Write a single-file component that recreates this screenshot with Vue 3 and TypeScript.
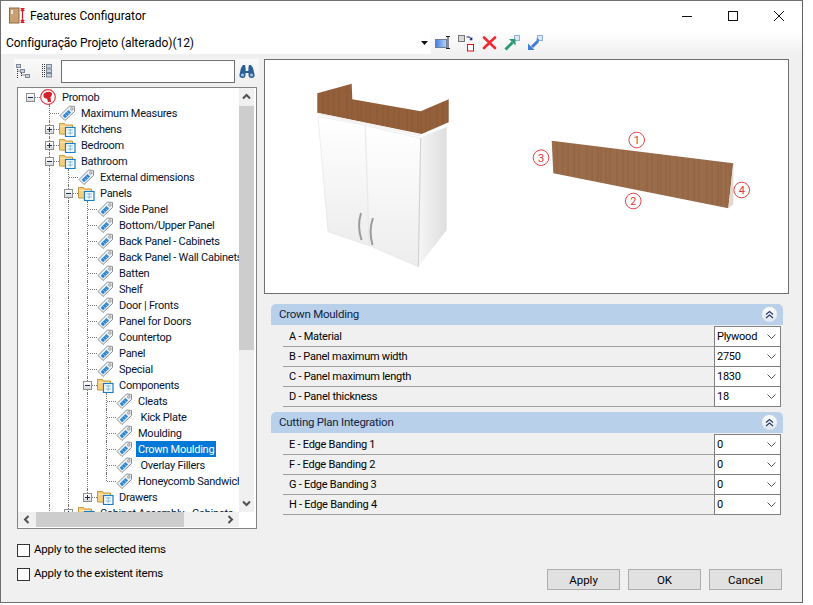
<script setup lang="ts">
import { computed } from 'vue'

type Kind = 'root' | 'folder' | 'tag'
type Toggle = 'open' | 'closed' | null

interface TreeItem {
  label: string
  depth: number
  kind: Kind
  toggle: Toggle
  selected?: boolean
}

const item = (label: string, depth: number, kind: Kind = 'tag', toggle: Toggle = null, selected = false): TreeItem => ({
  label, depth, kind, toggle, selected
})

const items: TreeItem[] = [
  item('Promob', 0, 'root', 'open'),
  item('Maximum Measures', 1),
  item('Kitchens', 1, 'folder', 'closed'),
  item('Bedroom', 1, 'folder', 'closed'),
  item('Bathroom', 1, 'folder', 'open'),
  item('External dimensions', 2),
  item('Panels', 2, 'folder', 'open'),
  item('Side Panel', 3),
  item('Bottom/Upper Panel', 3),
  item('Back Panel - Cabinets', 3),
  item('Back Panel - Wall Cabinets', 3),
  item('Batten', 3),
  item('Shelf', 3),
  item('Door | Fronts', 3),
  item('Panel for Doors', 3),
  item('Countertop', 3),
  item('Panel', 3),
  item('Special', 3),
  item('Components', 3, 'folder', 'open'),
  item('Cleats', 4),
  item(' Kick Plate', 4),
  item('Moulding', 4),
  item('Crown Moulding', 4, 'tag', null, true),
  item(' Overlay Fillers', 4),
  item('Honeycomb Sandwich', 4),
  item('Drawers', 3, 'folder', 'closed'),
  item('Cabinet Assembly - Cabinets', 2, 'folder', 'closed')
]

// does another sibling follow at this level, below the given row?
// levels 1 and 2 run on past the part of the tree that is scrolled into view
const continues = (index: number, level: number): boolean => {
  for (let i = index + 1; i < items.length; i++) {
    if (items[i].depth < level) return false
    if (items[i].depth === level) return true
  }
  return level === 1 || level === 2
}

const rows = computed(() =>
  items.map((row, index) => {
    const guides: boolean[] = []
    for (let level = 0; level < row.depth; level++) {
      guides.push(level > 0 && continues(index, level))
    }
    return { ...row, guides, last: !continues(index, row.depth) }
  })
)

const groups = [
  {
    title: 'Crown Moulding',
    props: [
      { label: 'A - Material', value: 'Plywood' },
      { label: 'B - Panel maximum width', value: '2750' },
      { label: 'C - Panel maximum length', value: '1830' },
      { label: 'D - Panel thickness', value: '18' }
    ]
  },
  {
    title: 'Cutting Plan Integration',
    props: [
      { label: 'E - Edge Banding 1', value: '0' },
      { label: 'F - Edge Banding 2', value: '0' },
      { label: 'G - Edge Banding 3', value: '0' },
      { label: 'H - Edge Banding 4', value: '0' }
    ]
  }
]

const grain = [0, 5, 9, 16, 22, 27, 33, 38, 46, 51, 57]
</script>

<template>
  <div class="window">
    <header class="titlebar">
      <svg class="app-icon" width="18" height="18" viewBox="0 0 18 18">
        <rect x="0.5" y="1" width="9.5" height="15" fill="#c9a273" stroke="#8a6a45" />
        <rect x="2" y="3" width="2" height="4" fill="#efe3d2" />
        <path d="M13.5 1.5v14M11.5 1.5h4M11.5 15.5h4M11.8 4l1.7-2 1.7 2M11.8 13l1.7 2 1.7-2" fill="none" stroke="#e0182d" stroke-width="1.2" />
      </svg>
      <span class="title">Features Configurator</span>
      <div class="controls">
        <svg width="12" height="12" viewBox="0 0 12 12"><path d="M1 6.5h10" stroke="#111" /></svg>
        <svg width="12" height="12" viewBox="0 0 12 12"><rect x="1.5" y="1.5" width="9" height="9" fill="none" stroke="#111" /></svg>
        <svg width="12" height="12" viewBox="0 0 12 12"><path d="M1 1l10 10M11 1L1 11" stroke="#111" /></svg>
      </div>
    </header>

    <div class="toolbar">
      <div class="config-combo">
        <span>Configuração Projeto (alterado)(12)</span>
        <svg width="7" height="4" viewBox="0 0 7 4"><path d="M0 0h7L3.5 4z" fill="#111" /></svg>
      </div>
      <div class="tool-icons">
        <svg width="16" height="16" viewBox="0 0 16 16">
          <defs>
            <linearGradient id="renameFill" x1="0" x2="1"><stop offset="0" stop-color="#3f7fe0" /><stop offset="1" stop-color="#bcd4f5" /></linearGradient>
          </defs>
          <rect x="0.5" y="4.5" width="11" height="8" fill="url(#renameFill)" stroke="#6f7f95" />
          <path d="M11 1.5h4M11 13.5h4M13 1.5v12" stroke="#222" fill="none" />
        </svg>
        <svg width="17" height="17" viewBox="0 0 17 17">
          <rect x="0.5" y="0.5" width="6" height="6" fill="#d9d9d9" stroke="#777" />
          <path d="M8.5 2h3l2 2.5M13.8 2.6v2.2h-2.2" fill="none" stroke="#1b2d8c" stroke-width="1.1" />
          <rect x="9.5" y="9.5" width="6" height="6.5" fill="#fff" stroke="#e01010" />
        </svg>
        <svg width="15" height="14" viewBox="0 0 15 14"><path d="M2 1.5l11 10.5M13 1.5L2 12" stroke="#ee2c35" stroke-width="2.6" stroke-linecap="round" /></svg>
        <svg width="16" height="16" viewBox="0 0 16 16">
          <rect x="10.5" y="0.5" width="5" height="5" fill="#dce7f7" stroke="#8fb0dd" />
          <path d="M1.5 14.5l7-7" stroke="#2c9a72" stroke-width="3" />
          <path d="M5 4h6.5v6.5z" fill="#2c9a72" />
        </svg>
        <svg width="16" height="16" viewBox="0 0 16 16">
          <rect x="10.5" y="0.5" width="5" height="5" fill="#dce7f7" stroke="#8fb0dd" />
          <path d="M5 12l6-6" stroke="#3f7fd6" stroke-width="3" />
          <path d="M1 15V8.5L7.5 15z" fill="#3f7fd6" />
          <path d="M12 4L9 3.5 11.5 7z" fill="#3f7fd6" />
        </svg>
      </div>
    </div>

    <main class="content">
      <aside class="left-pane">
        <div class="tree-tools">
          <svg class="tree-tool" width="16" height="16" viewBox="0 0 16 16">
            <path d="M1.5 4v11M1.5 8H5M5.5 8v6M5.5 12H9" stroke="#333" stroke-dasharray="1 1" fill="none" />
            <rect x="0.5" y="1.5" width="4" height="3" fill="#c8d2e0" stroke="#7d8795" />
            <rect x="4.5" y="6.5" width="4" height="3" fill="#c8d2e0" stroke="#7d8795" />
            <rect x="9.5" y="11.5" width="4" height="3" fill="#c8d2e0" stroke="#7d8795" />
          </svg>
          <svg class="tree-tool second" width="12" height="16" viewBox="0 0 12 16">
            <path d="M1.5 1v14M3.5 1v14" stroke="#333" stroke-dasharray="1 1" fill="none" />
            <rect x="5.5" y="1.5" width="5" height="3.5" fill="#c8d2e0" stroke="#7d8795" />
            <rect x="5.5" y="6" width="5" height="3.5" fill="#c8d2e0" stroke="#7d8795" />
            <rect x="5.5" y="10.5" width="5" height="3.5" fill="#c8d2e0" stroke="#7d8795" />
          </svg>
          <input class="search" type="text" />
          <svg class="binoculars" width="16" height="15" viewBox="0 0 16 15">
            <path d="M2 4l2-3h2l.6 3v3h2.8V4L10 1h2l2 3 1.5 6.5a3 3 0 0 1-6 1V9H6.500v2.500a3 3 0 0 1-6-1z" fill="#2b5f96" />
            <circle cx="3.500" cy="11" r="1.600" fill="#9cc2e8" />
            <circle cx="12.500" cy="11" r="1.600" fill="#9cc2e8" />
          </svg>
        </div>

        <div class="tree">
          <div class="tree-main">
            <ul class="rows">
              <li v-for="row in rows" :key="row.label" class="row">
                <span v-for="(on, i) in row.guides" :key="i" class="cell" :class="{ guide: on }"></span>
                <span class="cell connector" :class="{ last: row.last, root: row.depth === 0 }">
                  <span v-if="row.toggle" class="toggle">
                    <i class="bar"></i>
                    <i v-if="row.toggle === 'closed'" class="stem"></i>
                  </span>
                </span>
                <svg v-if="row.kind === 'root'" class="icon" width="17" height="16" viewBox="0 0 17 16">
                  <circle cx="8" cy="8" r="7.300" fill="#fff" stroke="#de3b45" stroke-width="1.200" />
                  <path d="M3.500 5.500C5 2.500 9 2 11.500 3.500c1 1.500.5 3.500-1 4.500l.5 5H8L7 9.500C5 10 3 8 3.500 5.500z" fill="#d3202c" />
                </svg>
                <svg v-else-if="row.kind === 'folder'" class="icon" width="17" height="16" viewBox="0 0 17 16">
                  <path d="M0.500 13V2.500h5l1 1.500h7v9z" fill="#f7cf7d" stroke="#c4963e" />
                  <path d="M1.500 5.500h11" stroke="#fde9b9" />
                  <rect x="6.500" y="6.500" width="9.500" height="9" fill="#fff" stroke="#1a7cc2" stroke-width="1.200" />
                  <path d="M8.500 9h5.500M8.500 12h5.500M11.200 8v6" stroke="#7fb8e0" />
                </svg>
                <svg v-else class="icon" width="17" height="16" viewBox="0 0 17 16">
                  <path d="M10.500 1L15.500 1.500V6.500L6 15.500 1 10.500z" fill="#eef1f4" stroke="#8b9097" />
                  <path d="M9.500 5l2.500 2.500L6 13.200 3.700 10.800z" fill="#2d86d2" />
                  <path d="M8.500 7.500l2 2M6.500 9.500l2 2" stroke="#a8d2f2" stroke-width="0.800" />
                  <circle cx="12.800" cy="3.900" r="1.200" fill="#fff" stroke="#777" stroke-width="0.800" />
                </svg>
                <span class="label" :class="{ selected: row.selected }">{{ row.label }}</span>
              </li>
            </ul>
            <div class="vscroll">
              <svg width="15" height="18" viewBox="0 0 15 18"><path d="M4 10.500l3.500-3.500 3.500 3.500" fill="none" stroke="#505050" stroke-width="2" /></svg>
              <div class="vthumb"></div>
              <svg class="arrow-end" width="15" height="18" viewBox="0 0 15 18"><path d="M4 7.500l3.500 3.500 3.500-3.500" fill="none" stroke="#505050" stroke-width="2" /></svg>
            </div>
          </div>
          <div class="hscroll">
            <svg width="18" height="15" viewBox="0 0 18 15"><path d="M10.500 4L7 7.500l3.500 3.500" fill="none" stroke="#505050" stroke-width="2" /></svg>
            <div class="hthumb"></div>
            <svg class="arrow-end" width="18" height="15" viewBox="0 0 18 15"><path d="M7.500 4L11 7.500 7.500 11" fill="none" stroke="#505050" stroke-width="2" /></svg>
          </div>
        </div>

        <label class="check"><input type="checkbox" /><span>Apply to the selected items</span></label>
        <label class="check"><input type="checkbox" /><span>Apply to the existent items</span></label>
      </aside>

      <section class="right-pane">
        <div class="viewer">
          <svg width="523" height="233" viewBox="265 60 523 233">
            <defs>
              <pattern id="wood" width="60" height="60" patternUnits="userSpaceOnUse">
                <rect width="60" height="60" fill="#93603b" />
                <rect v-for="x in grain" :key="x" :x="x" width="2" height="60" fill="#7f4e2c" opacity="0.22" />
              </pattern>
              <pattern id="woodLight" width="60" height="60" patternUnits="userSpaceOnUse">
                <rect width="60" height="60" fill="#9a6c4a" />
                <rect v-for="x in grain" :key="x" :x="x" width="2" height="60" fill="#84583a" opacity="0.22" />
              </pattern>
              <linearGradient id="sideFade" x1="0" x2="1">
                <stop offset="0" stop-color="#f6f6f6" />
                <stop offset="1" stop-color="#dedede" />
              </linearGradient>
              <linearGradient id="doorFade" x1="0" y1="0" x2="0" y2="1">
                <stop offset="0" stop-color="#ffffff" />
                <stop offset="1" stop-color="#ededed" />
              </linearGradient>
            </defs>

            <path d="M317.300 93.300L351.700 83.700 352.300 99.300 420.700 111.300 448.700 99.300V122.300L421.700 134 317.300 112.700z" fill="url(#wood)" />
            <path d="M421 137L446.700 127 446.700 230 418.300 266.700z" fill="url(#sideFade)" />
            <path d="M318 116.700L365 125 369 245.700 328 231.700z" fill="url(#doorFade)" stroke="#e3e3e3" stroke-width="0.600" />
            <path d="M365.500 125.500L420.700 138.300 418.300 266.700 369.500 245.700z" fill="url(#doorFade)" stroke="#e3e3e3" stroke-width="0.600" />
            <path d="M420.700 138.300L418.300 266.700" stroke="#cfcfcf" />
            <path d="M318 114l103 21.500" stroke="#f2f2f2" stroke-width="2" />
            <path d="M361 213c-2.500 8-2.500 18 0.500 27" fill="none" stroke="#9b9b9b" stroke-width="2" />
            <path d="M373 218c-3 8-3 18-0.500 27" fill="none" stroke="#9b9b9b" stroke-width="2" />

            <path d="M551.700 140.700L733.300 163.300 728.300 208.300 553.300 173.300z" fill="url(#woodLight)" />
            <path d="M733.300 163.300V204.500L728.300 208.300z" fill="#e2d9d1" />

            <g class="marker">
              <circle cx="636.700" cy="140" r="7.800" />
              <text x="636.700" y="144">1</text>
              <circle cx="633.300" cy="201" r="7.800" />
              <text x="633.300" y="205">2</text>
              <circle cx="541" cy="157.700" r="7.800" />
              <text x="541" y="161.700">3</text>
              <circle cx="741.700" cy="190" r="7.800" />
              <text x="741.700" y="194">4</text>
            </g>
          </svg>
        </div>

        <div class="groups">
          <div v-for="group in groups" :key="group.title" class="group">
            <div class="group-head">
              <span class="group-title">{{ group.title }}</span>
              <span class="collapse">
                <svg width="9" height="9" viewBox="0 0 9 9"><path d="M1 4.500l3.500-3 3.500 3M1 8l3.500-3 3.500 3" fill="none" stroke="#2b3a67" stroke-width="1.200" /></svg>
              </span>
            </div>
            <div v-for="prop in group.props" :key="prop.label" class="prop">
              <span class="prop-label">{{ prop.label }}</span>
              <div class="select">
                <span>{{ prop.value }}</span>
                <svg width="9" height="5" viewBox="0 0 9 5"><path d="M0.500 0.500l4 4 4-4" fill="none" stroke="#555" /></svg>
              </div>
            </div>
          </div>
        </div>

        <footer class="actions">
          <button type="button">Apply</button>
          <button type="button">OK</button>
          <button type="button">Cancel</button>
        </footer>
      </section>
    </main>
  </div>
</template>

<style>
html,
body {
  margin: 0;
  background: #fff;
}
</style>

<style scoped>
.window {
  box-sizing: border-box;
  width: 803px;
  height: 603px;
  border: 1px solid #6f6f6f;
  border-right-color: #5f6469;
  background: #f0f0f0;
  display: flex;
  flex-direction: column;
  font-family: Roboto, "Liberation Sans", sans-serif;
  font-size: 11px;
  letter-spacing: -0.25px;
  color: #000;
  overflow: hidden;
}

.titlebar {
  height: 30px;
  flex: none;
  background: #fff;
  display: flex;
  align-items: center;
  padding-left: 8px;
}

.app-icon {
  margin-right: 3px;
}

.title {
  font-size: 12px;
  letter-spacing: 0;
}

.controls {
  margin-left: auto;
  margin-right: 17px;
  display: flex;
  gap: 34px;
}

.toolbar {
  height: 24px;
  flex: none;
  display: flex;
  align-items: center;
  background: linear-gradient(#fff, #f0f0f0);
}

.config-combo {
  width: 430px;
  height: 22px;
  box-sizing: border-box;
  padding: 0 3px 0 5px;
  background: #fff;
  display: flex;
  align-items: center;
  justify-content: space-between;
  font-size: 12px;
  letter-spacing: -0.05px;
}

.tool-icons {
  display: flex;
  align-items: center;
  gap: 7px;
  margin-left: 4px;
}

.content {
  flex: 1;
  display: flex;
  padding-top: 4px;
  min-height: 0;
}

.left-pane {
  width: 245px;
  margin-left: 13px;
  flex: none;
}

.tree-tools {
  height: 24px;
  margin-bottom: 4px;
  display: flex;
  align-items: center;
  background: linear-gradient(#fafafa, #f0f0f0);
  padding-left: 2px;
}

.tree-tool {
  margin-left: 0;
}

.tree-tool.second {
  margin-left: 9px;
}

.search {
  box-sizing: border-box;
  width: 174px;
  height: 23px;
  margin: 0 0 0 8px;
  border: 1px solid #6f6f6f;
  background: #fff;
  padding: 0;
}

.binoculars {
  margin-left: 4px;
}

.tree {
  box-sizing: border-box;
  width: 240px;
  height: 442px;
  margin-left: 3px;
  border: 1px solid #838383;
  background: #fff;
  padding: 0 2px 1px 0;
  display: flex;
  flex-direction: column;
}

.tree-main {
  flex: 1;
  min-height: 0;
  display: flex;
}

.rows {
  flex: 1;
  min-width: 0;
  margin: 0;
  padding: 1px 0 0 3px;
  list-style: none;
  overflow: hidden;
}

.row {
  height: 16px;
  display: flex;
  align-items: center;
  white-space: pre;
}

.cell {
  position: relative;
  flex: none;
  width: 19px;
  height: 16px;
}

.guide::before,
.connector::before {
  content: "";
  position: absolute;
  left: 9px;
  top: 0;
  bottom: 0;
  border-left: 1px dotted #777;
}

.connector.last::before {
  bottom: 8px;
}

.connector.root::before {
  top: 8px;
  bottom: 0;
  left: 28px;
}

.connector::after {
  content: "";
  position: absolute;
  left: 10px;
  width: 9px;
  top: 8px;
  border-top: 1px dotted #777;
}

.toggle {
  position: absolute;
  left: 5px;
  top: 4px;
  width: 9px;
  height: 9px;
  box-sizing: border-box;
  border: 1px solid #8e8f8f;
  background: linear-gradient(#fff, #d8d8d8);
  z-index: 1;
}

.bar {
  position: absolute;
  left: 1px;
  top: 3px;
  width: 5px;
  height: 1px;
  background: #1e2f55;
}

.stem {
  position: absolute;
  left: 3px;
  top: 1px;
  width: 1px;
  height: 5px;
  background: #1e2f55;
}

.icon {
  flex: none;
  position: relative;
  z-index: 1;
}

.label {
  margin-left: 3px;
  padding: 1px 2px 0;
  box-sizing: border-box;
  line-height: 16px;
  height: 16px;
  overflow: hidden;
  color: #05142e;
}

.label.selected {
  background: #0078d7;
  color: #fff;
}

.vscroll {
  width: 15px;
  flex: none;
  background: #f0f0f0;
  display: flex;
  flex-direction: column;
}

.vthumb {
  height: 244px;
  background: #cdcdcd;
}

.vscroll .arrow-end {
  margin-top: auto;
}

.hscroll {
  height: 15px;
  flex: none;
  margin-right: 15px;
  background: #f0f0f0;
  display: flex;
}

.hthumb {
  width: 148px;
  background: #cdcdcd;
}

.hscroll .arrow-end {
  margin-left: auto;
}

.check {
  display: flex;
  align-items: center;
  gap: 4px;
  height: 14px;
  margin: 0 0 10px 3px;
  font-size: 11.5px;
}

.check span {
  padding-bottom: 2px;
}

.tree + .check {
  margin-top: 14px;
}

.check input {
  appearance: none;
  box-sizing: border-box;
  width: 13px;
  height: 13px;
  margin: 0;
  border: 1px solid #333;
  background: #fff;
}

.right-pane {
  width: 525px;
  margin-left: 5px;
  display: flex;
  flex-direction: column;
}

.viewer {
  box-sizing: border-box;
  height: 235px;
  border: 1px solid #6f6f6f;
  background: #fff;
}

.viewer svg {
  display: block;
}

.marker circle {
  fill: #fff;
  stroke: #e2454a;
  stroke-width: 1;
}

.marker text {
  fill: #e0383d;
  font-size: 11px;
  text-anchor: middle;
}

.groups {
  margin: 10px 0 0 7px;
  width: 512px;
}

.group {
  margin-bottom: 5px;
}

.group-head {
  height: 21px;
  margin-bottom: 2px;
  padding: 0 5px 0 8px;
  border-radius: 5px 5px 0 0;
  background: #b9d0ea;
  display: flex;
  align-items: center;
  justify-content: space-between;
  color: #10233f;
}

.group-title {
  font-size: 11.5px;
  padding-bottom: 2px;
}

.collapse {
  width: 15px;
  height: 15px;
  border-radius: 50%;
  background: linear-gradient(#fff, #dfe6f0);
  border: 1px solid #c3cfdf;
  display: flex;
  align-items: center;
  justify-content: center;
}

.prop {
  height: 20px;
  margin: 0 2px 0 12px;
  display: flex;
}

.prop-label {
  flex: 1;
  box-sizing: border-box;
  height: 20px;
  padding: 3px 0 0 6px;
  border-bottom: 1px solid #a0a0a0;
}

.select {
  box-sizing: border-box;
  width: 67px;
  height: 21px;
  margin-top: -1px;
  padding: 0 4px 0 2px;
  border: 1px solid #808080;
  background: #fff;
  display: flex;
  align-items: center;
  justify-content: space-between;
}

.actions {
  margin-top: auto;
  padding-bottom: 12px;
  width: 518px;
  display: flex;
  justify-content: flex-end;
  gap: 8px;
}

.actions button {
  box-sizing: border-box;
  width: 73px;
  height: 21px;
  padding: 0;
  border: 1px solid #adadad;
  background: #e1e1e1;
  font: inherit;
  font-size: 11.5px;
  letter-spacing: 0;
  color: #000;
}
</style>
